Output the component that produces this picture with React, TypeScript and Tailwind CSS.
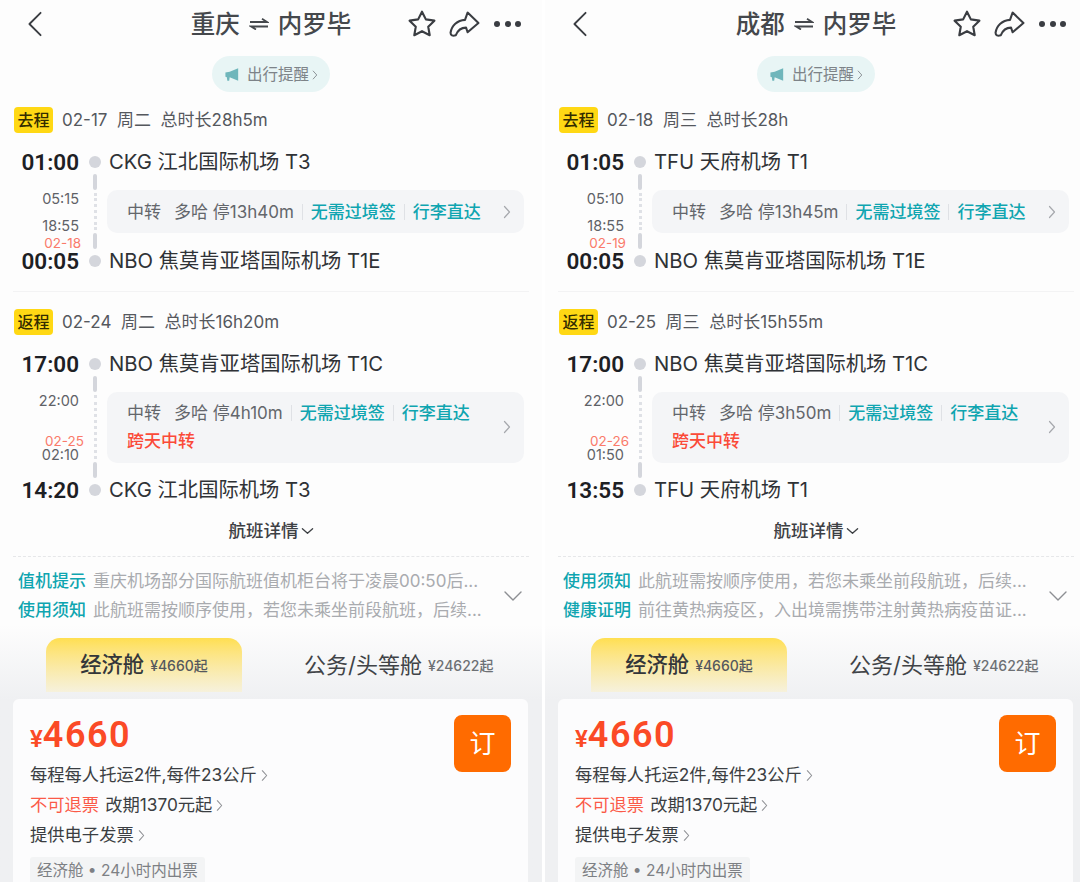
const FONT = "font-['Inter','Noto_Sans_CJK_SC',sans-serif]";
const NUM = "font-['Roboto','Noto_Sans_CJK_SC',sans-serif]";

type Leg = {
  tag: string; head: string;
  dep: string; depAp: string; arr: string; arrAp: string;
  t1: string; t2: string; nextDay: string; stop: string; cross: boolean;
};

function Chevron({ className }: { className: string }) {
  return (
    <svg viewBox="0 0 8 14" className={className} fill="none" stroke="currentColor" strokeWidth="1.2" strokeLinecap="round" strokeLinejoin="round">
      <path d="M1.5 1.5 L6.5 7 L1.5 12.5" />
    </svg>
  );
}

function Header({ from }: { from: string }) {
  return (
    <div className="flex items-center h-[48px] pl-[27px] pr-[21px] text-[#3a3d42]">
      <div className="flex-1 flex items-center">
        <svg viewBox="0 0 16 28" className="w-[16px] h-[26px] shrink-0" fill="none" stroke="currentColor" strokeWidth="2" strokeLinecap="round" strokeLinejoin="round">
          <path d="M14 2 L2 14 L14 26" />
        </svg>
      </div>
      <div className="mr-[6px] flex items-center justify-center gap-[9px] text-[24.5px] font-medium text-[#45484c] leading-none whitespace-nowrap">
        <span>{from}</span>
        <svg viewBox="0 0 20 12" className="w-[20px] h-[12px]" fill="none" stroke="currentColor" strokeWidth="1.8">
          <path d="M1 4 H18 L13 0.8 M19 8.5 H2 L7 11.5" />
        </svg>
        <span>内罗毕</span>
      </div>
      <div className="flex-1 flex items-center justify-end">
        <svg viewBox="0 0 28 28" className="w-[30px] h-[30px] shrink-0 mr-[12px]" fill="none" stroke="currentColor" strokeWidth="2" strokeLinejoin="round">
          <path d="M14 2.5 L17.6 9.7 L25.6 10.9 L19.8 16.5 L21.2 24.5 L14 20.7 L6.8 24.5 L8.2 16.5 L2.4 10.9 L10.4 9.7 Z" />
        </svg>
        <svg viewBox="0 0 30 28" className="w-[31px] h-[29px] shrink-0 mr-[14px]" fill="none" stroke="currentColor" strokeWidth="2" strokeLinejoin="round" strokeLinecap="round">
          <path d="M18 2.5 L28.5 12.5 L18 21.5 L16.5 17 C12 17 8.5 19.5 6.5 24.5 C3.5 25.5 1.5 24.5 1.5 22 C2.5 15 8 10 15.5 9.5 Z" />
        </svg>
        <div className="flex gap-[4.5px] shrink-0">
          <span className="w-[6px] h-[6px] rounded-full bg-[#3a3d42]" />
          <span className="w-[6px] h-[6px] rounded-full bg-[#3a3d42]" />
          <span className="w-[6px] h-[6px] rounded-full bg-[#3a3d42]" />
        </div>
      </div>
    </div>
  );
}

function Rail() {
  return (
    <div className="flex flex-col items-center h-full w-[4px]">
      <span className="w-[4px] h-[16px] rounded-full bg-[#d4d6dc] shrink-0" />
      <span className="flex-1 my-[3px] border-l-[3px] border-dotted border-[#dfe1e6]" />
      <span className="w-[4px] h-[16px] rounded-full bg-[#d4d6dc] shrink-0" />
    </div>
  );
}

function Stop({ time, ap }: { time: string; ap: string }) {
  return (
    <div className="flex items-center h-[24px]">
      <span className={`w-[79px] text-right text-[22.5px] font-semibold text-[#1d2024] leading-none ${NUM}`}>{time}</span>
      <span className="ml-[10px] w-[12px] h-[12px] rounded-full bg-[#d4d6dc]" />
      <span className="ml-[8px] text-[20.3px] text-[#2f3236] leading-none whitespace-nowrap">{ap}</span>
    </div>
  );
}

function LegBlock({ l }: { l: Leg }) {
  return (
    <div>
      <div className="flex items-center pl-[14px] h-[26px]">
        <span className="w-[39px] h-[26px] rounded-[4px] bg-[#ffd814] text-[#332c00] text-[16px] font-medium flex items-center justify-center">{l.tag}</span>
        <span className="ml-[9px] pt-[1px] text-[17px] text-[#55585d] whitespace-pre">{l.head}</span>
      </div>
      <div className="mt-[17px]">
        <Stop time={l.dep} ap={l.depAp} />
        <div className={`flex ${l.cross ? "h-[102px]" : "h-[75px]"}`}>
          <div className="w-[79px] pt-[16px] text-right text-[14.5px] leading-[18px] text-[#5f6267] flex flex-col">
            <span>{l.t1}</span>
            {l.cross ? (
              <>
                <span className="mt-[25px] -mr-[5px] text-[13.5px] leading-[12px] text-[#fa7a6a]">{l.nextDay}</span>
                <span className="leading-[16px]">{l.t2}</span>
              </>
            ) : (
              <>
                <span className="mt-[9px]">{l.t2}</span>
                <span className="mt-[2px] -mr-[2px] text-[13.5px] leading-[12px] text-[#fa7a6a]">{l.nextDay}</span>
              </>
            )}
          </div>
          <div className="ml-[12px] w-[8px] flex justify-center"><Rail /></div>
          <div className="ml-[8px] w-[417px] flex flex-col justify-center">
            <div className={`rounded-[10px] bg-[#f4f5f7] flex items-center pl-[20px] pr-[13px] ${l.cross ? "h-[71px]" : "h-[43px]"}`}>
              <div className="flex-1 flex flex-col gap-[6px]">
                <div className="flex items-center text-[17px] leading-[22px] whitespace-pre">
                  <span className="text-[#63666b]">中转</span>
                  <span className="ml-[13px] text-[#63666b]">多哈 {l.stop}</span>
                  <span className="mx-[8px] w-px h-[16px] bg-[#dfe1e5]" />
                  <span className="text-[#0fa5b0] font-medium">无需过境签</span>
                  <span className="mx-[8px] w-px h-[16px] bg-[#dfe1e5]" />
                  <span className="text-[#0fa5b0] font-medium">行李直达</span>
                </div>
                {l.cross && <div className="text-[17px] leading-[22px] font-medium text-[#fb4a38]">跨天中转</div>}
              </div>
              <Chevron className="w-[8px] h-[14px] text-[#a6a8ad]" />
            </div>
          </div>
        </div>
        <Stop time={l.arr} ap={l.arrAp} />
      </div>
    </div>
  );
}

function Note({ k, v }: { k: string; v: string }) {
  return (
    <div className="flex items-center h-[29px] text-[17px] whitespace-nowrap">
      <span className="text-[#0fa5b0] font-medium">{k}</span>
      <span className="ml-[7px] text-[#a9abaf]">{v}</span>
    </div>
  );
}

function Panel({ from, out, back, n1, n2 }: { from: string; out: Leg; back: Leg; n1: [string, string]; n2: [string, string] }) {
  return (
    <div className="w-[542px] shrink-0 h-[882px] overflow-hidden bg-[#fdfdfd]">
      <Header from={from} />
      <div className="flex justify-center mt-[8px]">
        <div className="h-[36px] px-[12px] pt-[1px] rounded-full bg-[#e8f5f5] flex items-center text-[15.5px] text-[#7d8388]">
          <svg viewBox="0 0 18 18" className="w-[17px] h-[17px] mr-[6px]" fill="#6fb6bb">
            <path d="M1.5 7 L6 6 L15 2.5 V15.5 L6 12 L5.5 15.5 H3.5 L3 11.8 L1.5 11.5 Z" />
          </svg>
          <span>出行提醒</span>
          <Chevron className="ml-[3px] w-[6px] h-[10px] text-[#7d8388]" />
        </div>
      </div>
      <div className="mt-[15px]"><LegBlock l={out} /></div>
      <div className="mx-[13px] mt-[18px] h-px bg-[#f3f3f4]" />
      <div className="mt-[17px]"><LegBlock l={back} /></div>
      <div className="flex items-center justify-center h-[24px] mt-[17px] text-[17.5px] font-medium text-[#3d4044]">
        <span>航班详情</span>
        <svg viewBox="0 0 14 8" className="w-[13px] h-[8px] ml-[2px]" fill="none" stroke="currentColor" strokeWidth="1.4" strokeLinecap="round" strokeLinejoin="round">
          <path d="M1.5 1.5 L7 6.5 L12.5 1.5" />
        </svg>
      </div>
      <div className="mx-[13px] mt-[13px] border-t border-dashed border-[#e6e7e9]" />
      <div className="flex items-center pl-[18px] w-[522px] mt-[10px]">
        <div className="flex-1">
          <Note k={n1[0]} v={n1[1]} />
          <Note k={n2[0]} v={n2[1]} />
        </div>
        <svg viewBox="0 0 18 10" className="w-[18px] h-[10px] text-[#8d8f93]" fill="none" stroke="currentColor" strokeWidth="1.4" strokeLinecap="round" strokeLinejoin="round">
          <path d="M1 1 L9 9 L17 1" />
        </svg>
      </div>
      <div className="h-[300px] bg-[#eff0f2] bg-gradient-to-b from-[#fdfdfd] to-[#eff0f2] to-[25%]">
        <div className="flex items-end h-[67px]">
          <div className="ml-[46px] w-[196px] h-[54px] rounded-t-[14px] bg-gradient-to-b from-[#ffdf50] to-[#f6f1dc] flex items-center justify-center gap-[6px]">
            <span className="text-[21.3px] font-medium text-[#33363a]">经济舱</span>
            <span className="text-[14px] font-medium text-[#55585d]">¥4660起</span>
          </div>
          <div className="ml-[62px] h-[54px] flex items-center gap-[6px] whitespace-nowrap">
            <span className="text-[22px] text-[#404347]">公务/头等舱</span>
            <span className="text-[14px] font-medium text-[#6d7074]">¥24622起</span>
          </div>
        </div>
        <div className="mt-[7px] ml-[13px] w-[515px] h-[226px] rounded-t-[6px] bg-[#fcfcfd] pl-[17px] pr-[17px] pt-[16px]">
          <div className="flex justify-between">
            <div className={`flex items-baseline h-[38px] pt-[2px] text-[#fb4a26] font-semibold leading-none ${NUM}`}>
              <span className="text-[24px]">¥</span>
              <span className="text-[36px] tracking-[1.5px]">4660</span>
            </div>
            <div className="w-[57px] h-[57px] rounded-[8px] bg-[#ff6b00] text-white text-[26px] flex items-center justify-center">订</div>
          </div>
          <div className="-mt-[12px] flex flex-col text-[17.3px] text-[#3b3e42]">
            <div className="h-[30px] flex items-center gap-[4px]"><span>每程每人托运2件,每件23公斤</span><Chevron className="w-[7px] h-[13px] text-[#8d8f93]" /></div>
            <div className="h-[30px] flex items-center gap-[4px]"><span className="text-[#fb5a48] mr-[2px]">不可退票</span><span>改期1370元起</span><Chevron className="w-[7px] h-[13px] text-[#8d8f93]" /></div>
            <div className="h-[30px] flex items-center gap-[4px]"><span>提供电子发票</span><Chevron className="w-[7px] h-[13px] text-[#8d8f93]" /></div>
          </div>
          <div className="mt-[7px] inline-flex items-center h-[28px] px-[7px] rounded-[3px] bg-[#f3f4f5] text-[15.5px] leading-none text-[#7d8084]">经济舱 • 24小时内出票</div>
        </div>
      </div>
    </div>
  );
}

const L1: Leg = { tag: "去程", head: "02-17  周二  总时长28h5m", dep: "01:00", depAp: "CKG 江北国际机场 T3", arr: "00:05", arrAp: "NBO 焦莫肯亚塔国际机场 T1E", t1: "05:15", t2: "18:55", nextDay: "02-18", stop: "停13h40m", cross: false };
const L2: Leg = { tag: "返程", head: "02-24  周二  总时长16h20m", dep: "17:00", depAp: "NBO 焦莫肯亚塔国际机场 T1C", arr: "14:20", arrAp: "CKG 江北国际机场 T3", t1: "22:00", t2: "02:10", nextDay: "02-25", stop: "停4h10m", cross: true };
const R1: Leg = { tag: "去程", head: "02-18  周三  总时长28h", dep: "01:05", depAp: "TFU 天府机场 T1", arr: "00:05", arrAp: "NBO 焦莫肯亚塔国际机场 T1E", t1: "05:10", t2: "18:55", nextDay: "02-19", stop: "停13h45m", cross: false };
const R2: Leg = { tag: "返程", head: "02-25  周三  总时长15h55m", dep: "17:00", depAp: "NBO 焦莫肯亚塔国际机场 T1C", arr: "13:55", arrAp: "TFU 天府机场 T1", t1: "22:00", t2: "01:50", nextDay: "02-26", stop: "停3h50m", cross: true };

export default function App() {
  return (
    <div className={`w-[1080px] h-[882px] overflow-hidden flex bg-white ${FONT}`}>
      <Panel from="重庆" out={L1} back={L2}
        n1={["值机提示", "重庆机场部分国际航班值机柜台将于凌晨00:50后..."]}
        n2={["使用须知", "此航班需按顺序使用，若您未乘坐前段航班，后续..."]} />
      <div className="w-[3px] shrink-0 bg-white" />
      <Panel from="成都" out={R1} back={R2}
        n1={["使用须知", "此航班需按顺序使用，若您未乘坐前段航班，后续..."]}
        n2={["健康证明", "前往黄热病疫区，入出境需携带注射黄热病疫苗证..."]} />
    </div>
  );
}
